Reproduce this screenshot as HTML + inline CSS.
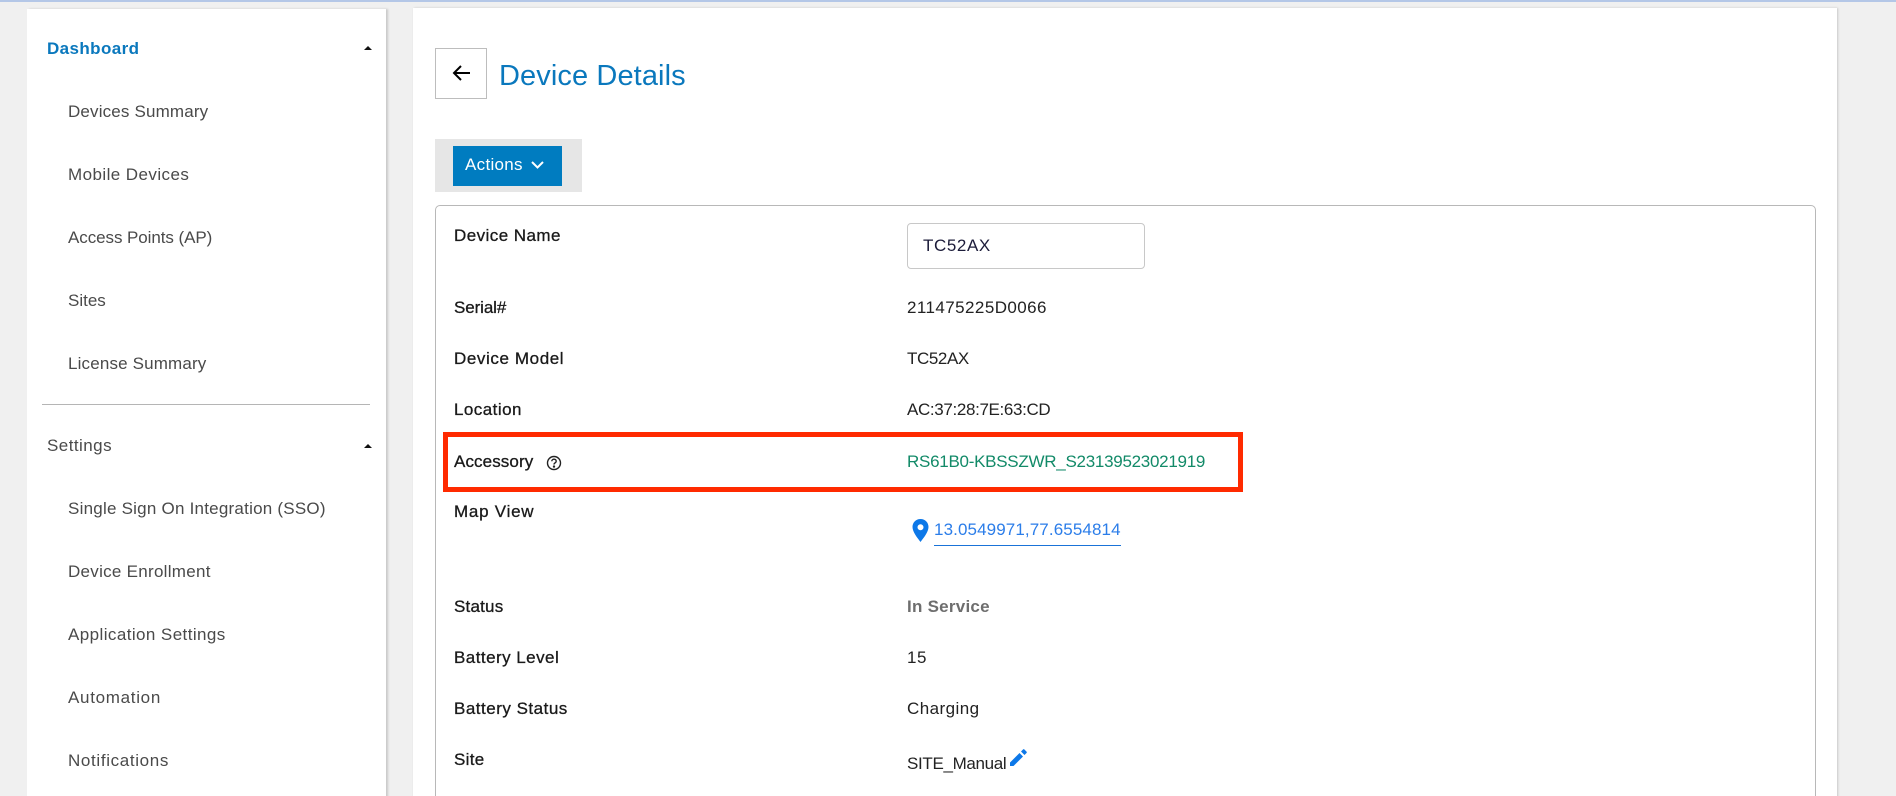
<!DOCTYPE html>
<html><head><meta charset="utf-8"><style>
html,body{margin:0;padding:0;width:1896px;height:796px;overflow:hidden}
#w{position:relative;width:1896px;height:796px;overflow:hidden;background:#f0f0f0;font-family:"Liberation Sans",sans-serif;color:#1a1a1a}
.t{position:absolute;white-space:nowrap;line-height:20px;font-size:17px}
.nav{left:68px;color:#4a4a4a}
.l{left:454px;color:#1a1a1a;-webkit-text-stroke:.3px #1a1a1a}
.v{left:907px;color:#222}
.abs{position:absolute}
</style></head><body><div id="w">
<div class="abs" style="left:0;top:0;width:1896px;height:2px;background:#b4c7e7"></div>
<div class="abs" style="left:27px;top:9px;width:359px;height:800px;background:#fff;box-shadow:2px 0 2px #c8c8c8"></div>
<div class="abs" style="left:413px;top:8px;width:1424px;height:800px;background:#fff;box-shadow:1px 0 2px #c8c8c8"></div>

<div class="t" style="left:47px;top:39px;color:#0a78bd;font-weight:bold;letter-spacing:.4px">Dashboard</div>
<div class="abs" style="left:364px;top:46px;border-left:4px solid transparent;border-right:4px solid transparent;border-bottom:4px solid #111"></div>
<div class="t nav" style="top:102px;letter-spacing:.16px">Devices Summary</div>
<div class="t nav" style="top:165px;letter-spacing:.43px">Mobile Devices</div>
<div class="t nav" style="top:228px;letter-spacing:-.07px">Access Points (AP)</div>
<div class="t nav" style="top:291px">Sites</div>
<div class="t nav" style="top:354px;letter-spacing:.16px">License Summary</div>
<div class="abs" style="left:42px;top:404px;width:328px;height:1px;background:#b5b5b5"></div>
<div class="t nav" style="left:47px;top:436px;letter-spacing:.45px">Settings</div>
<div class="abs" style="left:364px;top:444px;border-left:4px solid transparent;border-right:4px solid transparent;border-bottom:4px solid #111"></div>
<div class="t nav" style="top:499px;letter-spacing:.23px">Single Sign On Integration (SSO)</div>
<div class="t nav" style="top:562px;letter-spacing:.28px">Device Enrollment</div>
<div class="t nav" style="top:625px;letter-spacing:.42px">Application Settings</div>
<div class="t nav" style="top:688px;letter-spacing:.7px">Automation</div>
<div class="t nav" style="top:751px;letter-spacing:.65px">Notifications</div>

<div class="abs" style="left:435px;top:48px;width:50px;height:49px;border:1px solid #bdbdbd;background:#fff"></div>
<svg class="abs" style="left:452px;top:63px" width="20" height="20" viewBox="0 0 20 20" fill="none" stroke="#000" stroke-width="2"><path d="M18 10H2M9 3L2 10l7 7"/></svg>
<div class="t" style="left:499px;top:56px;line-height:40px;font-size:29px;color:#0a78bd;letter-spacing:.1px">Device Details</div>

<div class="abs" style="left:435px;top:139px;width:147px;height:53px;background:#e6e6e6"></div>
<div class="abs" style="left:453px;top:146px;width:109px;height:40px;background:#007cc0"></div>
<div class="t" style="left:465px;top:155px;color:#fff;letter-spacing:.3px">Actions</div>
<svg class="abs" style="left:530px;top:159px" width="15" height="12" viewBox="0 0 15 12" fill="none" stroke="#fff" stroke-width="2"><path d="M2 3l5.500 5.500L13 3"/></svg>

<div class="abs" style="left:435px;top:205px;width:1379px;height:620px;border:1px solid #b8b8b8;border-radius:5px;background:#fff"></div>

<div class="t l" style="top:226px;letter-spacing:.44px">Device Name</div>
<div class="abs" style="left:907px;top:223px;width:236px;height:44px;border:1px solid #c8c8c8;border-radius:4px;background:#fff"></div>
<div class="t v" style="left:923px;top:236px;color:#1c1c3a;letter-spacing:.6px">TC52AX</div>
<div class="t l" style="top:298px;letter-spacing:-.1px">Serial#</div><div class="t v" style="top:298px;letter-spacing:.43px">211475225D0066</div>
<div class="t l" style="top:349px;letter-spacing:.6px">Device Model</div><div class="t v" style="top:349px;letter-spacing:-.4px">TC52AX</div>
<div class="t l" style="top:400px;letter-spacing:.45px">Location</div><div class="t v" style="top:400px;letter-spacing:-.35px">AC:37:28:7E:63:CD</div>
<div class="t l" style="top:452px;letter-spacing:.1px">Accessory</div>
<svg class="abs" style="left:546px;top:455px" width="16" height="16" viewBox="0 0 16 16" fill="none" stroke="#222" stroke-width="1.400"><circle cx="8" cy="8" r="6.500"/><path d="M5.800 6.300C5.800 4.900 6.900 4.200 8 4.200s2.200.7 2.200 2C10.200 7.800 8 7.800 8 9.500"/><circle cx="8" cy="11.600" r=".5" fill="#222"/></svg>
<div class="t v" style="top:452px;color:#128a68;letter-spacing:-.27px">RS61B0-KBSSZWR_S23139523021919</div>
<div class="abs" style="left:443px;top:432px;width:790px;height:50px;border:5px solid #ff2a00"></div>
<div class="t l" style="top:502px;letter-spacing:.75px">Map View</div>
<svg class="abs" style="left:912px;top:519px" width="17" height="23" viewBox="0 0 17 23"><path fill-rule="evenodd" fill="#0d78e8" d="M8.500 0C3.800 0 .5 3.500.5 8c0 5 5 11 8 15 3-4 8-10 8-15 0-4.500-3.300-8-8-8zm0 5.200a3 3 0 1 1 0 6 3 3 0 0 1 0-6z"/></svg>
<div class="t" style="left:934px;top:520px;color:#2b7de9;letter-spacing:.11px">13.0549971,77.6554814</div>
<div class="abs" style="left:934px;top:545px;width:187px;height:1px;background:#1a73d8"></div>
<div class="t l" style="top:597px;letter-spacing:.2px">Status</div><div class="t v" style="top:597px;color:#6e6e6e;font-weight:bold;letter-spacing:.25px">In Service</div>
<div class="t l" style="top:648px;letter-spacing:.46px">Battery Level</div><div class="t v" style="top:648px;letter-spacing:.5px">15</div>
<div class="t l" style="top:699px;letter-spacing:.5px">Battery Status</div><div class="t v" style="top:699px;letter-spacing:.45px">Charging</div>
<div class="t l" style="top:750px;letter-spacing:.3px">Site</div><div class="t v" style="top:754px;letter-spacing:-.33px">SITE_Manual</div>
<svg class="abs" style="left:1009px;top:749px" width="19" height="18" viewBox="0 0 19 18"><path fill="#0d78e8" d="M1 13.500V17h3.500L14 7.500 10.500 4zM17.500 4a1 1 0 0 0 0-1.400L15.400.5a1 1 0 0 0-1.400 0l-2 2L15.500 6z"/></svg>
</div></body></html>
